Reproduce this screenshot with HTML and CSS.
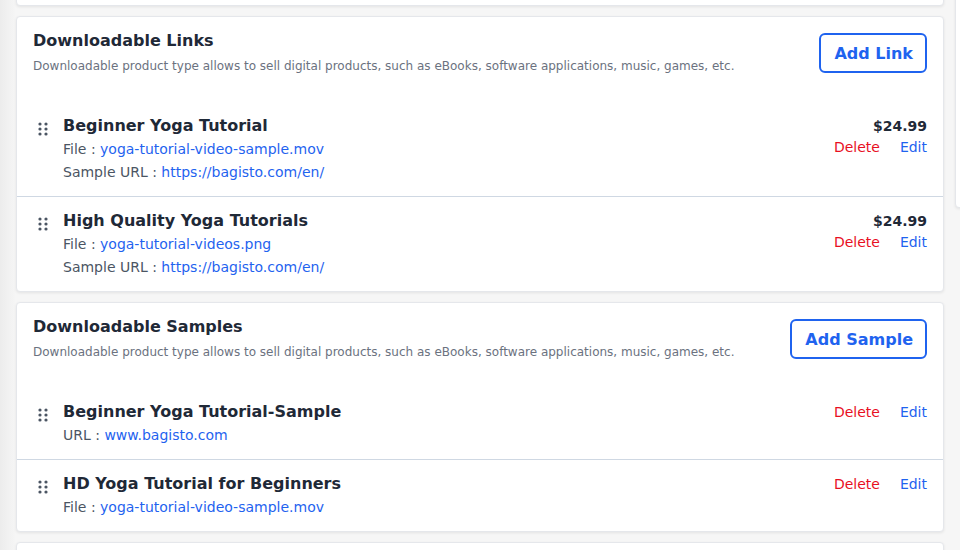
FILE: index.html
```html
<!DOCTYPE html>
<html lang="en">
  <head>
    <meta charset="UTF-8" />
    <meta name="viewport" content="width=device-width, initial-scale=1.0" />
    <title>Downloadable Information</title>
    <link rel="stylesheet" href="styles.css">
  </head>
  <body>
    <div class="layout">
      <div class="main-column">
        <div class="card card-stub"></div>

        <div class="card">
          <div class="card-header">
            <div>
              <h2 class="card-title">Downloadable Links</h2>
              <p class="card-info">Downloadable product type allows to sell digital products, such as eBooks, software applications, music, games, etc.</p>
            </div>
            <button class="btn-outline">Add Link</button>
          </div>

          <div class="item">
            <div class="item-left">
              <span class="drag-icon">
                <svg width="10" height="14" viewBox="0 0 10 14"><circle cx="2" cy="2" r="1.6"/><circle cx="8" cy="2" r="1.6"/><circle cx="2" cy="7" r="1.6"/><circle cx="8" cy="7" r="1.6"/><circle cx="2" cy="12" r="1.6"/><circle cx="8" cy="12" r="1.6"/></svg>
              </span>
              <div>
                <p class="item-title">Beginner Yoga Tutorial</p>
                <p class="item-meta">File : <a href="#">yoga-tutorial-video-sample.mov</a></p>
                <p class="item-meta">Sample URL : <a href="#">https://bagisto.com/en/</a></p>
              </div>
            </div>
            <div class="item-right">
              <p class="item-price">$24.99</p>
              <div class="item-actions">
                <a class="action-delete" href="#">Delete</a>
                <a class="action-edit" href="#">Edit</a>
              </div>
            </div>
          </div>

          <div class="item">
            <div class="item-left">
              <span class="drag-icon">
                <svg width="10" height="14" viewBox="0 0 10 14"><circle cx="2" cy="2" r="1.6"/><circle cx="8" cy="2" r="1.6"/><circle cx="2" cy="7" r="1.6"/><circle cx="8" cy="7" r="1.6"/><circle cx="2" cy="12" r="1.6"/><circle cx="8" cy="12" r="1.6"/></svg>
              </span>
              <div>
                <p class="item-title">High Quality Yoga Tutorials</p>
                <p class="item-meta">File : <a href="#">yoga-tutorial-videos.png</a></p>
                <p class="item-meta">Sample URL : <a href="#">https://bagisto.com/en/</a></p>
              </div>
            </div>
            <div class="item-right">
              <p class="item-price">$24.99</p>
              <div class="item-actions">
                <a class="action-delete" href="#">Delete</a>
                <a class="action-edit" href="#">Edit</a>
              </div>
            </div>
          </div>
        </div>

        <div class="card">
          <div class="card-header">
            <div>
              <h2 class="card-title">Downloadable Samples</h2>
              <p class="card-info">Downloadable product type allows to sell digital products, such as eBooks, software applications, music, games, etc.</p>
            </div>
            <button class="btn-outline">Add Sample</button>
          </div>

          <div class="item">
            <div class="item-left">
              <span class="drag-icon">
                <svg width="10" height="14" viewBox="0 0 10 14"><circle cx="2" cy="2" r="1.6"/><circle cx="8" cy="2" r="1.6"/><circle cx="2" cy="7" r="1.6"/><circle cx="8" cy="7" r="1.6"/><circle cx="2" cy="12" r="1.6"/><circle cx="8" cy="12" r="1.6"/></svg>
              </span>
              <div>
                <p class="item-title">Beginner Yoga Tutorial-Sample</p>
                <p class="item-meta">URL : <a href="#">www.bagisto.com</a></p>
              </div>
            </div>
            <div class="item-right">
              <div class="item-actions single">
                <a class="action-delete" href="#">Delete</a>
                <a class="action-edit" href="#">Edit</a>
              </div>
            </div>
          </div>

          <div class="item">
            <div class="item-left">
              <span class="drag-icon">
                <svg width="10" height="14" viewBox="0 0 10 14"><circle cx="2" cy="2" r="1.6"/><circle cx="8" cy="2" r="1.6"/><circle cx="2" cy="7" r="1.6"/><circle cx="8" cy="7" r="1.6"/><circle cx="2" cy="12" r="1.6"/><circle cx="8" cy="12" r="1.6"/></svg>
              </span>
              <div>
                <p class="item-title">HD Yoga Tutorial for Beginners</p>
                <p class="item-meta">File : <a href="#">yoga-tutorial-video-sample.mov</a></p>
              </div>
            </div>
            <div class="item-right">
              <div class="item-actions single">
                <a class="action-delete" href="#">Delete</a>
                <a class="action-edit" href="#">Edit</a>
              </div>
            </div>
          </div>
        </div>

        <div class="card card-stub"></div>
      </div>

      <div class="side-column">
        <div class="card side-card"></div>
      </div>
    </div>
  </body>
</html>
```

FILE: styles.css
```css
body {
  margin: 0;
  height: 550px;
  overflow: hidden;
  background: linear-gradient(to right, #ececec 0, #f6f6f6 16px) #f6f6f6;
  font-family: "DejaVu Sans", sans-serif;
  color: #1f2937;
}
p {
  margin: 0;
}
a {
  text-decoration: none;
  color: #1f63ef;
}
.layout {
  display: flex;
  gap: 11px;
  padding-left: 16px;
  margin-top: -34px;
}
.main-column {
  width: 928px;
  flex-shrink: 0;
  display: flex;
  flex-direction: column;
  gap: 10px;
}
.side-column {
  width: 300px;
  flex-shrink: 0;
}
.card {
  background: #fff;
  border: 1px solid #e5e7eb;
  border-radius: 4px;
  box-shadow: 0 1px 3px rgba(0, 0, 0, 0.08);
}
.card-stub {
  height: 38px;
}
.side-card {
  height: 240px;
}
.card-header {
  display: flex;
  justify-content: space-between;
  align-items: flex-start;
  padding: 16px 16px 0;
  margin-bottom: 27px;
}
.card-title {
  margin: 0;
  font-size: 16px;
  line-height: 16px;
  font-weight: bold;
  color: #1f2937;
}
.card-info {
  margin-top: 8px;
  font-size: 12px;
  line-height: 18px;
  color: #6b7280;
}
.btn-outline {
  height: 40px;
  padding: 0 12px 0 13px;
  border: 2px solid #1f63ef;
  border-radius: 6px;
  background: #fff;
  color: #1f63ef;
  font-family: "DejaVu Sans", sans-serif;
  font-size: 16px;
  font-weight: bold;
  cursor: pointer;
}
.item {
  display: flex;
  justify-content: space-between;
  padding: 12px 16px;
}
.item + .item {
  border-top: 1px solid #cfd8e3;
}
.item-left {
  display: flex;
  gap: 15px;
}
.drag-icon {
  padding: 7px 0 0 5px;
  fill: #4b5563;
}
.item-title {
  font-size: 16px;
  line-height: 24px;
  font-weight: bold;
  color: #1f2937;
}
.item-meta {
  font-size: 14px;
  line-height: 23px;
  color: #4b5563;
}
.item-right {
  display: flex;
  flex-direction: column;
  align-items: flex-end;
}
.item-price {
  font-size: 14px;
  line-height: 24px;
  font-weight: bold;
  color: #1f2937;
}
.item-actions {
  display: flex;
  gap: 20px;
  font-size: 14px;
  line-height: 18px;
}
.item-actions.single {
  line-height: 24px;
}
.action-delete {
  color: #e8101f;
}
.action-edit {
  color: #1f63ef;
}
```
